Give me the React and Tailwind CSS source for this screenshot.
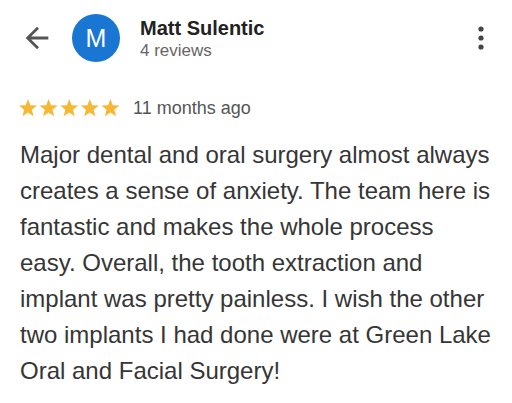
export default function App() {
  const font = { fontFamily: '"Liberation Sans", Arial, Helvetica, sans-serif' };
  return (
    <div className="w-[512px] h-[403px] bg-white overflow-hidden" style={font}>
      <div className="flex items-center pt-[14px]">
        <svg className="ml-[20px] shrink-0" width="34" height="34" viewBox="0 0 24 24" fill="#555555">
          <path d="M20 11H7.83l5.59-5.59L12 4l-8 8 8 8 1.41-1.41L7.83 13H20v-2z" />
        </svg>
        <div className="ml-[18px] w-[48px] h-[48px] rounded-full bg-[#1976d2] flex items-center justify-center text-white text-[25px] leading-none shrink-0">
          M
        </div>
        <div className="ml-[20px] flex flex-col">
          <div className="text-[20px] leading-[24px] font-bold text-[#222222]">Matt Sulentic</div>
          <div className="text-[17px] leading-[20px] mt-[1px] text-[#666666]">4 reviews</div>
        </div>
        <svg className="ml-auto mr-[25px] shrink-0" width="12" height="28" viewBox="0 0 12 28" fill="#444444">
          <circle cx="6" cy="5" r="2.6" />
          <circle cx="6" cy="14" r="2.6" />
          <circle cx="6" cy="23" r="2.6" />
        </svg>
      </div>
      <div className="flex items-center mt-[34px] ml-[18px] h-[24px]">
        <svg width="103" height="20" viewBox="0 0 103 20" fill="#f8b733">
          {[0, 1, 2, 3, 4].map((i) => (
            <polygon
              key={i}
              transform={`translate(${i * 20.6} 0)`}
              points="10,1 12.35,7.2 19,7.5 13.8,11.7 15.6,18.2 10,14.5 4.4,18.2 6.2,11.7 1,7.5 7.65,7.2"
            />
          ))}
        </svg>
        <span className="ml-[12px] text-[18px] leading-[24px] text-[#555555]">11 months ago</span>
      </div>
      <p className="mt-[17px] px-[20px] text-[24px] leading-[36px] text-[#363636]">
        Major dental and oral surgery almost always creates a sense of anxiety. The team here is fantastic and makes the whole process easy. Overall, the tooth extraction and implant was pretty painless. I wish the other two implants I had done were at Green Lake Oral and Facial Surgery!
      </p>
    </div>
  );
}
